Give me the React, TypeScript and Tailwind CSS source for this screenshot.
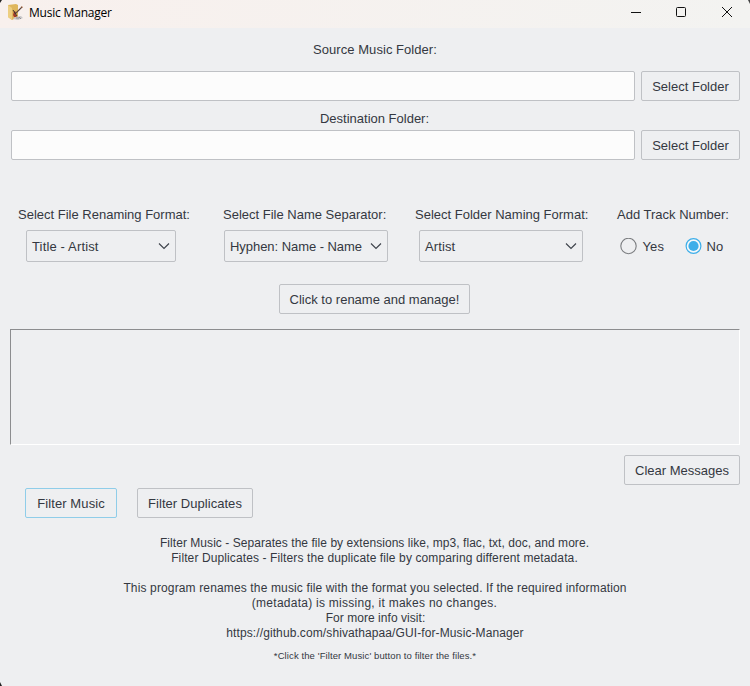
import type { ReactNode } from "react";

function Button({ children, className }: { children: ReactNode; className: string }) {
  return (
    <button
      className={`flex h-[30px] shrink-0 items-center justify-center whitespace-nowrap rounded-[2px] border pt-[2px] ${className}`}
    >
      {children}
    </button>
  );
}

function Combo({ label, value, className, boxClass, valueClass }: {
  label: string;
  value: string;
  className: string;
  boxClass: string;
  valueClass: string;
}) {
  return (
    <div className={`flex shrink-0 flex-col ${className}`}>
      <div className="h-[15px] whitespace-nowrap leading-[15px]">{label}</div>
      <div className={`mt-2 flex h-8 items-center justify-between rounded-[2px] border border-[#bfc1c5] px-[5px] ${boxClass}`}>
        <span className={`whitespace-nowrap pt-[2px] ${valueClass}`}>{value}</span>
        <svg className="shrink-0" width="12" height="8" viewBox="0 0 12 8" fill="none" stroke="#3e434b" strokeWidth="1.15">
          <path d="M1 1.5 6 6.5 11 1.5" />
        </svg>
      </div>
    </div>
  );
}

function FolderRow() {
  return (
    <div className="flex gap-[6px] pl-[11px] pr-[10px]">
      <input className="h-[30px] min-w-0 flex-1 rounded-[2px] border border-[#bfc1c5] bg-[#fcfcfc] outline-none" />
      <Button className="w-[99px] border-[#bfc1c5]">Select Folder</Button>
    </div>
  );
}

function AppIcon() {
  return (
    <svg width="17" height="17" viewBox="0 0 17 17">
      <path d="M1 1 9 0 11 1 11 13 5 16 1 13Z" fill="#dfb65c" />
      <path d="M1 1 5 4 5 16 1 13Z" fill="#edce80" />
      <path d="M8 13 14 12 16 14 11 16 6 15Z" fill="#c9c7c9" />
      <path d="M9 14h3M12 13l2 2" stroke="#85858b" strokeWidth=".8" />
      <path d="M7 7 9 8 8 10 10 12 9 13 7 13 6 11Z" fill="#a43a27" />
      <path d="M8 10 15 3" stroke="#5f4840" strokeWidth="1.1" />
      <path d="m6 6 4 6" stroke="#302b2b" strokeWidth=".9" />
      <path d="m14 2 2 1-1 1Z" fill="#b0683f" />
    </svg>
  );
}

export default function App() {
  return (
    <div className="relative flex h-[686px] w-[750px] flex-col overflow-hidden bg-[#eeeff1] font-['Liberation_Sans',Arial,sans-serif] text-[13px] text-[#343841]">
      <header className="flex h-7 shrink-0 items-center bg-linear-to-r from-[#f8f0ed] to-[#f3f3f1] pl-[7px] text-black">
        <div className="-mt-[3px]"><AppIcon /></div>
        <span className="-mt-[2px] ml-[5px] font-['Open_Sans','Noto_Sans',sans-serif] text-[12px] tracking-[-0.2px]">Music Manager</span>
        <svg className="ml-auto mr-[15px]" width="106" height="28" viewBox="0 0 106 28" fill="none" stroke="#111" strokeWidth="1">
          <path d="M2 12.5h10" />
          <rect x="47.5" y="7.5" width="9" height="9" rx="1" />
          <path d="m93 7 10 10M103 7 93 17" />
        </svg>
      </header>
      <svg className="absolute left-0 top-0" width="3" height="3"><path d="M0 0h2L0 3Z" fill="#222" /></svg>
      <svg className="absolute right-0 top-0" width="3" height="4"><path d="M1 0h2v4Z" fill="#444" /></svg>
      <svg className="absolute bottom-0 left-0" width="3" height="4"><path d="M0 0 2 4H0Z" fill="#222" /></svg>

      <div className="mt-[14px] h-[15px] text-center leading-[15px] tracking-[0.05px]">Source Music Folder:</div>
      <div className="mt-[14px]"><FolderRow /></div>
      <div className="mt-[10px] h-[15px] pr-px text-center leading-[15px]">Destination Folder:</div>
      <div className="mt-1"><FolderRow /></div>

      <div className="mt-[47px] flex h-[55px] pl-[18px]">
        <Combo label="Select File Renaming Format:" value="Title - Artist" className="w-[172px]" boxClass="ml-2 w-[150px]" valueClass="tracking-[0.15px]" />
        <Combo label="Select File Name Separator:" value="Hyphen: Name - Name" className="ml-[33px] w-[166px]" boxClass="ml-px w-[164px]" valueClass="tracking-[-0.05px]" />
        <Combo label="Select Folder Naming Format:" value="Artist" className="ml-[26px] w-[173px]" boxClass="ml-1 w-[164px]" valueClass="tracking-[0.1px]" />
        <div className="ml-[29px] w-[113px]">
          <div className="h-[15px] whitespace-nowrap leading-[15px]">Add Track Number:</div>
          <div className="mt-2 flex h-8 items-center pl-[2.5px]">
            <svg className="shrink-0" width="17" height="17" viewBox="0 0 17 17"><circle cx="8.5" cy="8" r="7.7" fill="none" stroke="#7b7d80" strokeWidth="1.1" /></svg>
            <span className="ml-[6px] w-[42px] pt-[2px] tracking-[0.1px]">Yes</span>
            <svg className="shrink-0" width="17" height="17" viewBox="0 0 17 17">
              <circle cx="8.5" cy="8" r="7.4" fill="#f5f8fa" stroke="#3daee9" strokeWidth="1.2" />
              <circle cx="8.5" cy="8" r="5.1" fill="#3daee9" />
            </svg>
            <span className="ml-[5px] pt-[2px]">No</span>
          </div>
        </div>
      </div>

      <div className="mt-[22px] flex pl-[279px]"><Button className="w-[191px] border-[#bfc1c5]">Click to rename and manage!</Button></div>
      <div className="ml-[10px] mt-[15px] h-[116px] w-[730px] shrink-0 border border-b-white border-l-[#8c8d8f] border-r-white border-t-[#8c8d8f]" />
      <div className="mt-[10px] flex justify-end pr-[10px]"><Button className="w-[116px] border-[#bfc1c5]">Clear Messages</Button></div>
      <div className="mt-[3px] flex gap-5 pl-[25px]">
        <Button className="w-[92px] border-[#8fcde9] tracking-[0.1px]">Filter Music</Button>
        <Button className="w-[116px] border-[#bfc1c5] tracking-[0.04px]">Filter Duplicates</Button>
      </div>

      <div className="mt-[18px] text-center text-[12px] leading-[15px]">
        <p className="pr-px tracking-[0.05px]">Filter Music - Separates the file by extensions like, mp3, flac, txt, doc, and more.</p>
        <p className="pr-px tracking-[0.11px]">Filter Duplicates - Filters the duplicate file by comparing different metadata.</p>
        <p className="mt-[15px] tracking-[0.14px]">This program renames the music file with the format you selected. If the required information</p>
        <p className="pr-px tracking-[0.26px]">(metadata) is missing, it makes no changes.</p>
        <p className="pl-px tracking-[0.05px]">For more info visit:</p>
        <p className="tracking-[0.1px]">https://github.com/shivathapaa/GUI-for-Music-Manager</p>
        <p className="mt-[8px] text-[9.5px] leading-[13px] tracking-[0.1px]">*Click the 'Filter Music' button to filter the files.*</p>
      </div>
    </div>
  );
}
